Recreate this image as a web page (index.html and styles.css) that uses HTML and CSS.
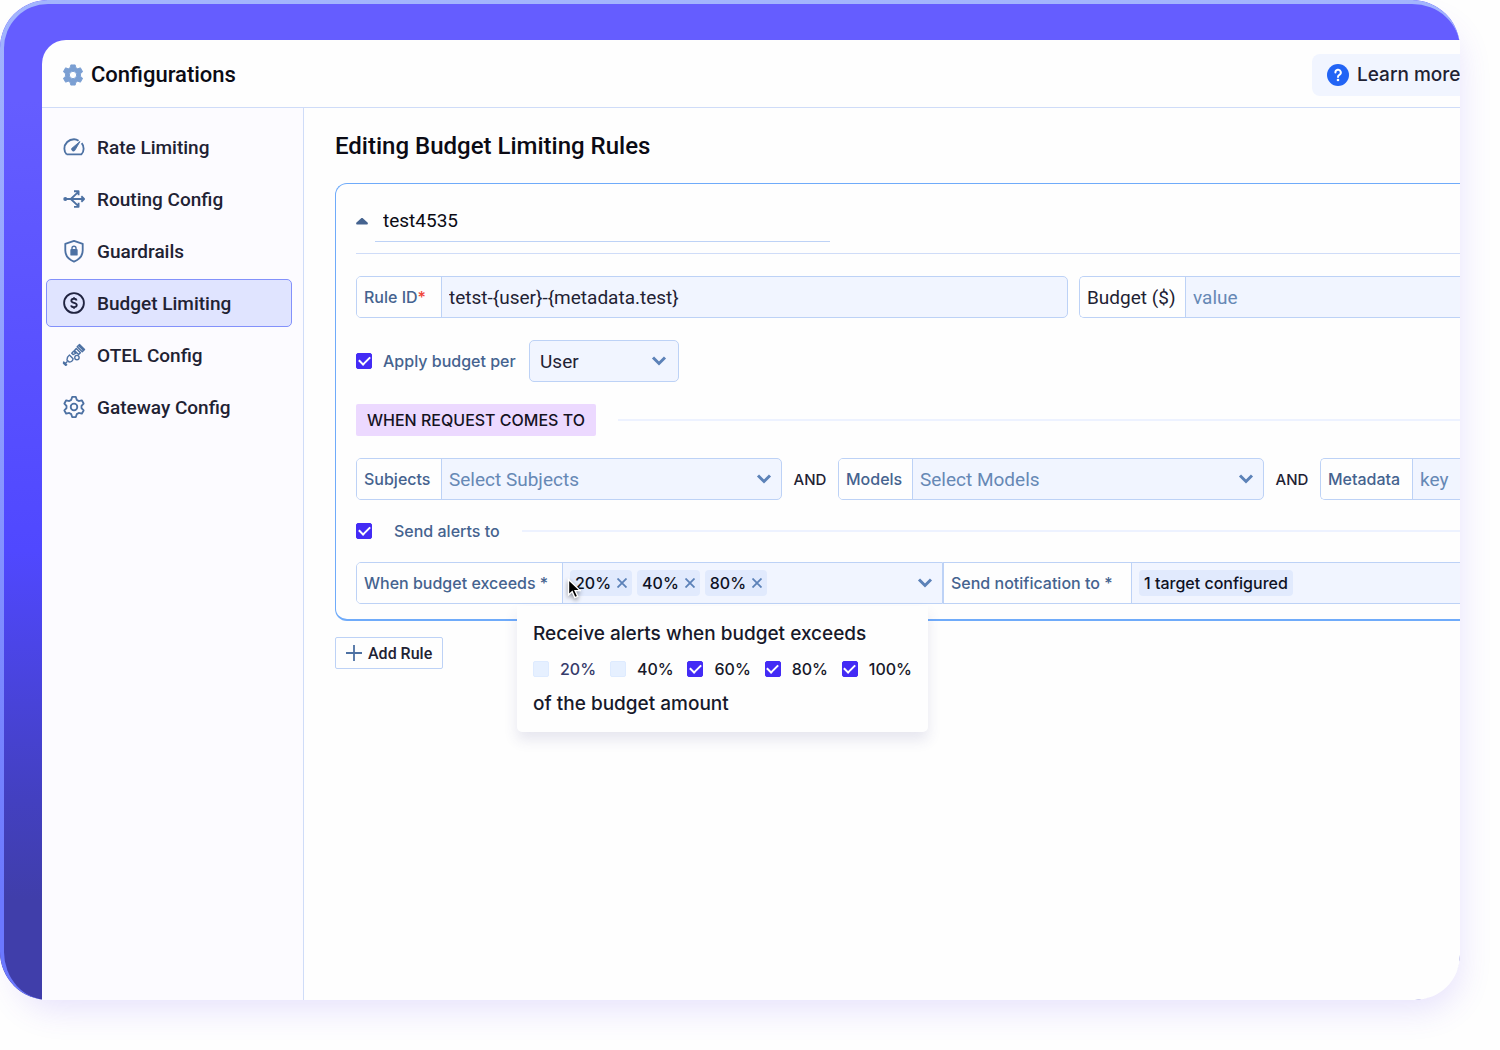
FILE: index.html
```html
<!DOCTYPE html>
<html lang="en">
<head>
    <meta charset="UTF-8">
    <meta name="viewport" content="width=device-width, initial-scale=1.0">
    <title>Configurations</title>
    <link rel="stylesheet" href="styles.css">
</head>
<body>
    <div class="frame">
        <div class="app">
            <header class="topbar">
                <svg class="title-icon" viewBox="0 0 24 24" fill="#7b9fd2" fill-rule="evenodd"><path d="M9.6 1h4.8l.7 3 2 1.2 3-1 2.4 4.2-2.3 2.1v3l2.3 2.1-2.4 4.2-3-1-2 1.2-.7 3H9.6l-.7-3-2-1.2-3 1-2.4-4.2 2.3-2.1v-3L1.5 8.4l2.4-4.2 3 1 2-1.2zM12 8a4 4 0 1 0 0 8 4 4 0 0 0 0-8z" stroke="#7b9fd2" stroke-linejoin="round"/></svg>
                <h1>Configurations</h1>
                <a class="learn-more" href="#">
                    <svg viewBox="0 0 22 22"><circle cx="11" cy="11" r="11" fill="#2264f5"/><path d="M8.4 8.4a2.7 2.7 0 1 1 4 2.4c-1 .6-1.4 1-1.4 2.1" fill="none" stroke="#fff" stroke-width="2" stroke-linecap="round"/><circle cx="11" cy="16" r="1.3" fill="#fff"/></svg>
                    <span>Learn more</span>
                </a>
            </header>

            <div class="layout">
                <nav class="sidebar">
                    <a class="nav-item" href="#">
                        <svg viewBox="0 0 24 24"><path d="M4 20h16c1.5-1.5 2.5-3.7 2.5-6.2 0-2.3-.8-4.4-2.1-6M17 5.1C15.5 4.1 13.8 3.5 12 3.5 6.2 3.5 1.5 8.2 1.5 13.8 1.5 16.3 2.5 18.500 4 20"/><path d="M18.5 6l-5.200 9a2 2 0 1 1-2.500-2.500z" fill="currentColor" stroke-width="1"/></svg>
                        Rate Limiting
                    </a>
                    <a class="nav-item" href="#">
                        <svg viewBox="0 0 24 24"><circle cx="2.5" cy="12" r="2.2" fill="currentColor" stroke="none"/><path d="M3 12h20M20 9l3 3-3 3M8.5 12L16.500 4.500M12 3.500h5V8M8.500 12l8 7.500M12 20.500h5V16"/></svg>
                        Routing Config
                    </a>
                    <a class="nav-item" href="#">
                        <svg viewBox="0 0 24 24"><path d="M12 1l9.500 3.200v7.300c0 5.500-3.700 9.700-9.500 12-5.800-2.300-9.500-6.500-9.500-12V4.200z"/><path d="M9 10.800h6v5.200H9z" fill="currentColor"/><path d="M9.800 10.500V9a2.200 2.200 0 0 1 4.400 0v1.500" stroke-width="1.500"/></svg>
                        Guardrails
                    </a>
                    <a class="nav-item active" href="#">
                        <svg viewBox="0 0 24 24"><circle cx="12" cy="12" r="10.800"/><path d="M14.900 9.200c-.3-1.200-1.400-1.800-2.900-1.800-1.700 0-2.900.8-2.900 2.200 0 3.200 5.900 1.500 5.900 4.700 0 1.500-1.300 2.300-3 2.300s-2.900-.8-3.100-2.100M12 5.800v1.600M12 16.600v1.600"/></svg>
                        Budget Limiting
                    </a>
                    <a class="nav-item" href="#">
                        <svg viewBox="0 0 24 24" class="thin"><path d="M15.500 3l2.500-2.500 5.500 5.500-2.500 2.500zM17.200 1.800l5 5M14.500 5l4.500 4.500-2 2-4.500-4.500zM11.500 8l2.500 2-3 1.500-1.500-1.500zM7 12l4 4c-.3 2.500-2 4-4.500 3.500L4.300 17.500C4.500 15 5.500 13 7 12zM.8 19.500L4 22.700 2.800 23.300 .5 21zM2.500 21.200l2.200-2.200"/><circle cx="15.200" cy="14.800" r="2.400"/></svg>
                        OTEL Config
                    </a>
                    <a class="nav-item" href="#">
                        <svg viewBox="0 0 24 24"><path d="M10 1h4l1 3.200 2.200 1.300 3.300-.8 2 3.500L20.200 10.700v2.600l2.300 2.500-2 3.500-3.300-.8L15 19.800 14 23h-4l-1-3.200-2.200-1.300-3.300.8-2-3.500 2.300-2.500v-2.600L1.500 8.200l2-3.500 3.300.8L9 4.200z"/><circle cx="12" cy="12" r="3.600"/></svg>
                        Gateway Config
                    </a>
                </nav>

                <main class="content">
                    <h2>Editing Budget Limiting Rules</h2>

                    <section class="rule-card">
                        <div class="rule-head">
                            <button class="collapse" aria-label="Collapse rule"></button>
                            <input class="rule-name" type="text" value="test4535" aria-label="Rule name">
                        </div>

                        <div class="row fields">
                            <div class="field rule-id">
                                <label for="ruleId">Rule ID<span class="required">*</span></label>
                                <input id="ruleId" type="text" value="tetst-{user}-{metadata.test}">
                            </div>
                            <div class="field budget">
                                <label for="budget" class="plain">Budget ($)</label>
                                <input id="budget" type="text" placeholder="value">
                            </div>
                        </div>

                        <div class="row apply">
                            <input type="checkbox" id="applyPer" checked>
                            <label for="applyPer" class="check-label">Apply budget per</label>
                            <div class="field user">
                                <select aria-label="Apply budget per"><option>User</option></select>
                                <svg class="chevron" viewBox="0 0 14 10"><path d="M1 1.500L7 7.500 13 1.500"/></svg>
                            </div>
                        </div>

                        <div class="row divider-row">
                            <span class="section-tag">WHEN REQUEST COMES TO</span>
                            <hr>
                        </div>

                        <div class="row conditions">
                            <div class="field subjects">
                                <label for="subjects">Subjects</label>
                                <select id="subjects" class="empty"><option>Select Subjects</option></select>
                                <svg class="chevron" viewBox="0 0 14 10"><path d="M1 1.500L7 7.500 13 1.500"/></svg>
                            </div>
                            <span class="and">AND</span>
                            <div class="field models">
                                <label for="models">Models</label>
                                <select id="models" class="empty"><option>Select Models</option></select>
                                <svg class="chevron" viewBox="0 0 14 10"><path d="M1 1.500L7 7.500 13 1.500"/></svg>
                            </div>
                            <span class="and">AND</span>
                            <div class="field metadata">
                                <label for="metaKey">Metadata</label>
                                <input id="metaKey" type="text" placeholder="key">
                            </div>
                        </div>

                        <div class="row divider-row alerts">
                            <input type="checkbox" id="sendAlerts" checked>
                            <label for="sendAlerts" class="check-label">Send alerts to</label>
                            <hr>
                        </div>

                        <div class="row targets">
                            <div class="field thresholds">
                                <span class="field-label">When budget exceeds *</span>
                                <div class="chips">
                                    <span class="chip">20% <button aria-label="Remove 20%"><svg viewBox="0 0 10 10"><path d="M.5.500l9 9M9.500.500l-9 9"/></svg></button></span>
                                    <span class="chip">40% <button aria-label="Remove 40%"><svg viewBox="0 0 10 10"><path d="M.5.500l9 9M9.500.500l-9 9"/></svg></button></span>
                                    <span class="chip">80% <button aria-label="Remove 80%"><svg viewBox="0 0 10 10"><path d="M.5.500l9 9M9.500.500l-9 9"/></svg></button></span>
                                </div>
                                <svg class="chevron" viewBox="0 0 14 10"><path d="M1 1.500L7 7.500 13 1.500"/></svg>
                                <svg class="cursor" viewBox="0 0 14 22"><path d="M1.500 1.500v15.500l3.700-3.400 2.600 6 2.900-1.300-2.600-5.700h5z" fill="#000" stroke="#fff" stroke-width="1.400"/></svg>

                                <div class="popover">
                                    <p>Receive alerts when budget exceeds</p>
                                    <div class="options">
                                        <label class="soft"><input type="checkbox">20%</label>
                                        <label><input type="checkbox">40%</label>
                                        <label><input type="checkbox" checked>60%</label>
                                        <label><input type="checkbox" checked>80%</label>
                                        <label><input type="checkbox" checked>100%</label>
                                    </div>
                                    <p>of the budget amount</p>
                                </div>
                            </div>
                            <div class="field notify">
                                <span class="field-label">Send notification to *</span>
                                <div class="chips"><span class="chip">1 target configured</span></div>
                            </div>
                        </div>
                    </section>

                    <button class="add-rule">
                        <svg viewBox="0 0 16 16"><path d="M8 0v16M0 8h16"/></svg>
                        Add Rule
                    </button>
                </main>
            </div>
        </div>
    </div>
</body>
</html>
```
FILE: styles.css
```css
:root {
    --font-main: Roboto, "Liberation Sans", sans-serif;
    --font-label: Inter, "Liberation Sans", sans-serif;
    --ink: #1f2233;
    --label: #45638f;
    --placeholder: #6688b5;
    --line: #bdd2f6;
    --fill: #f1f5ff;
    --accent: #432bf5;
    --rule: #6fabfa;
}
* {
    box-sizing: border-box;
}
body {
    margin: 0;
    height: 100vh;
    padding: 0 40px 50px 0;
    background-color: #fefefe;
    font-family: var(--font-main);
    font-size: 19px;
    color: var(--ink);
    overflow: hidden;
}
.frame {
    position: relative;
    height: 100%;
    padding: 40px 0 0 42px;
    border-radius: 48px;
    background: linear-gradient(#655dff 0%, #655dff 10%, #5048ff 55%, #4340c0 80%, #403eaa 90%, #403eaa 100%);
    box-shadow: 8px 18px 32px -8px rgba(100, 70, 240, 0.15);
}
/* light edge along the top and left of the frame */
.frame::before {
    content: "";
    position: absolute;
    inset: 0;
    border-radius: 48px;
    padding: 4px 0 0 4px;
    background: linear-gradient(#a3b5fd 0%, #98a8ff 25%, #6b78ff 90%);
    mask: linear-gradient(#000 0 0) content-box exclude, linear-gradient(#000 0 0);
}
.app {
    position: relative;
    height: 100%;
    display: flex;
    flex-direction: column;
    background-color: #fefefe;
    border-radius: 24px 0 45px 0;
    overflow: hidden;
}
h1, h2, p {
    margin: 0;
    font-weight: 500;
}
svg {
    flex: none;
}
.topbar {
    display: flex;
    align-items: center;
    height: 68px;
    flex: none;
    padding: 2px 0 0 20px;
    border-bottom: 1px solid #cfdcf8;
}
.title-icon {
    width: 22px;
    height: 22px;
    margin-right: 7px;
}
h1 {
    font-size: 22px;
    color: #0b0b14;
}
.learn-more {
    display: flex;
    align-items: center;
    gap: 8px;
    width: 148px;
    height: 42px;
    margin-left: auto;
    padding-left: 15px;
    border-radius: 8px 0 0 8px;
    background-color: var(--fill);
    font: 500 19px var(--font-label);
    color: var(--ink);
    text-decoration: none;
    white-space: nowrap;
}
.learn-more svg {
    width: 22px;
    height: 22px;
}
.layout {
    display: flex;
    flex: 1;
    min-height: 0;
}
.sidebar {
    display: flex;
    flex-direction: column;
    gap: 4px;
    flex: none;
    width: 262px;
    padding: 15px 11px 0 4px;
    background-color: #fcfbff;
    border-right: 1px solid #cfdcf8;
}
.nav-item {
    display: flex;
    align-items: center;
    gap: 11px;
    height: 48px;
    padding-left: 15px;
    border: 1px solid transparent;
    border-radius: 5px;
    font-size: 19px;
    font-weight: 500;
    color: var(--ink);
    text-decoration: none;
}
.nav-item svg {
    width: 24px;
    height: 24px;
    padding: 1px;
    color: #4d71a3;
    fill: none;
    stroke: currentColor;
    stroke-width: 2;
    stroke-linejoin: round;
    overflow: visible;
}
.nav-item svg.thin {
    stroke-width: 1.5;
}
.nav-item.active {
    background-color: #e0e4ff;
    border-color: #8391fb;
}
.nav-item.active svg {
    color: #202340;
}
.content {
    flex: 1;
    min-width: 0;
    padding: 23px 0 0 31px;
}
h2 {
    font-size: 24px;
    line-height: 30px;
    color: #0b0b14;
}
.rule-card {
    margin-top: 22px;
    padding: 16px 0 15px 20px;
    border: 2px solid var(--rule);
    border-width: 1px 0 2px 1px;
    border-radius: 12px 0 0 12px;
}
.rule-head {
    display: flex;
    align-items: center;
    height: 54px;
    padding-bottom: 11px;
    border-bottom: 1px solid #cfdcf8;
}
.collapse {
    width: 12px;
    height: 7px;
    padding: 0;
    border: 0;
    background-color: var(--label);
    clip-path: polygon(50% 0, 100% 80%, 95% 100%, 5% 100%, 0 80%);
}
.rule-name {
    width: 455px;
    height: 42px;
    margin-left: 7px;
    padding: 0 8px;
    border: 0;
    border-bottom: 1px solid var(--line);
    background: none;
    font: 400 19px var(--font-main);
    color: #0b0b14;
}
.row {
    display: flex;
    align-items: center;
    margin-top: 22px;
}
.fields {
    gap: 11px;
}
.field {
    position: relative;
    display: flex;
    align-items: stretch;
    flex: none;
    height: 42px;
    border: 1px solid var(--line);
    border-radius: 5px;
    background-color: var(--fill);
}
.field > label,
.field-label {
    display: flex;
    align-items: center;
    flex: none;
    padding-left: 7px;
    border-right: 1px solid var(--line);
    border-radius: 4px 0 0 4px;
    background-color: #fefefe;
    font: 500 16px var(--font-label);
    color: var(--label);
    white-space: nowrap;
}
.field > label.plain {
    font: 400 19px var(--font-main);
    color: var(--ink);
}
.required {
    color: #f04438;
}
.field > input,
.field > select {
    flex: 1;
    min-width: 0;
    padding: 0 7px;
    border: 0;
    background: none;
    appearance: none;
    font: 400 19px var(--font-main);
    color: var(--ink);
}
.field > input::placeholder,
.field > select.empty {
    color: var(--placeholder);
    opacity: 1;
}
.rule-id {
    width: 712px;
}
.rule-id label,
.subjects label {
    width: 85px;
}
.budget {
    flex: 1;
}
.budget label {
    width: 106px;
}
.budget,
.metadata,
.notify {
    border-right: 0;
    border-radius: 5px 0 0 5px;
}
.chevron {
    position: absolute;
    right: 10px;
    top: 15px;
    width: 14px;
    height: 10px;
    fill: none;
    stroke: #5c82b8;
    stroke-width: 3;
    pointer-events: none;
    overflow: visible;
}
input[type="checkbox"] {
    flex: none;
    width: 16px;
    height: 16px;
    margin: 0;
    appearance: none;
    border: 1px solid #deebff;
    border-radius: 2px;
    background-color: #e6f0ff;
}
input[type="checkbox"]:checked {
    display: grid;
    place-items: center;
    border-color: var(--accent);
    background-color: var(--accent);
}
input[type="checkbox"]:checked::after {
    content: "";
    width: 9px;
    height: 5px;
    margin-bottom: 3px;
    border: solid #fff;
    border-width: 0 0 2px 2px;
    transform: rotate(-45deg);
}
.check-label {
    margin-left: 11px;
    font: 500 16px var(--font-label);
    color: var(--label);
}
.user {
    width: 150px;
    margin-left: auto;
}
.user .chevron {
    right: 12px;
}
.apply {
    width: 323px;
}
.user > select {
    padding-left: 10px;
}
.divider-row {
    gap: 22px;
}
.divider-row hr {
    flex: 1;
    margin: 0;
    border: 0;
    border-top: 2px solid #edf2ff;
}
.section-tag {
    padding: 0 11px;
    border-radius: 2px;
    background-color: #ecd9ff;
    font: 500 16px/32px var(--font-label);
    color: #15131f;
}
.subjects,
.models {
    width: 426px;
}
.models label {
    width: 74px;
}
.metadata {
    flex: 1;
}
.metadata label {
    width: 92px;
}
.and {
    flex: none;
    width: 56px;
    text-align: center;
    font: 500 15px var(--font-label);
}
.alerts,
.targets {
    margin-top: 21px;
}
.alerts {
    height: 20px;
}
.alerts .check-label {
    margin-left: 0;
}
.thresholds {
    width: 587px;
    border-radius: 5px 0 0 5px;
}
.thresholds .field-label {
    width: 206px;
}
.chips {
    display: flex;
    align-items: center;
    gap: 5px;
    padding-left: 7px;
}
.chip {
    display: flex;
    align-items: center;
    gap: 6px;
    height: 26px;
    padding: 0 5px;
    border-radius: 4px;
    background-color: #e1eafd;
    font: 500 16px var(--font-label);
    color: #0e1224;
}
.chip button {
    display: flex;
    padding: 0;
    border: 0;
    background: none;
}
.chip svg {
    width: 10px;
    height: 10px;
    fill: none;
    stroke: #5c82b8;
    stroke-width: 1.8;
}
.notify {
    flex: 1;
    border-radius: 0;
}
.notify .field-label {
    width: 188px;
    border-radius: 0;
}
.cursor {
    position: absolute;
    left: 210px;
    top: 15px;
    width: 14px;
    height: 22px;
    filter: drop-shadow(0 2px 2px rgba(0, 0, 0, 0.4));
}
.popover {
    position: absolute;
    left: 160px;
    top: 43px;
    z-index: 2;
    width: 411px;
    padding: 16px;
    border-radius: 0 0 5px 5px;
    background-color: #fefefe;
    box-shadow: 0 8px 14px rgba(60, 60, 130, 0.12);
    font: 500 19px/24px var(--font-label);
    color: #17192a;
}
.popover p {
    white-space: nowrap;
}
.options {
    display: flex;
    justify-content: space-between;
    margin: 11px 0;
    font-size: 16px;
}
.options label {
    display: flex;
    align-items: center;
    gap: 11px;
}
.options .soft {
    color: #363b6b;
}
.add-rule {
    display: flex;
    align-items: center;
    gap: 6px;
    height: 32px;
    margin-top: 16px;
    padding: 0 10px;
    border: 1px solid var(--line);
    border-radius: 2px;
    background-color: #fefefe;
    font: 500 16px var(--font-main);
    color: var(--ink);
}
.add-rule svg {
    width: 16px;
    height: 16px;
    stroke: #4d71a3;
    stroke-width: 1.8;
}
```
